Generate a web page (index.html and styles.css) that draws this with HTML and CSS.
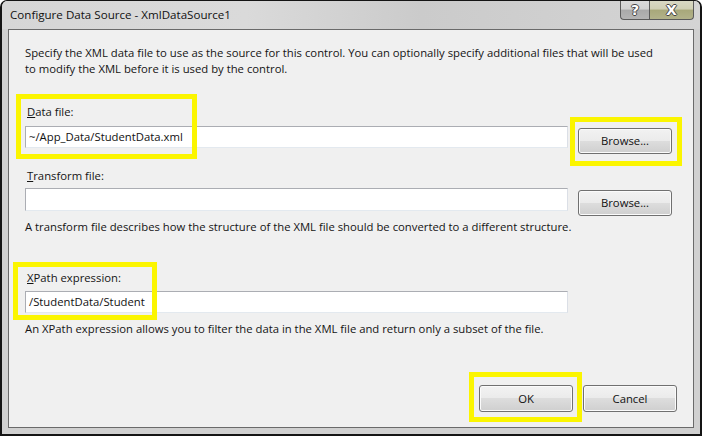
FILE: index.html
```html
<!DOCTYPE html>
<html>
<head>
<meta charset="utf-8">
<link rel="stylesheet" href="styles.css">
</head>
<body>
<div class="window">
  <div class="titlebar">
    <div class="title">Configure Data Source - XmlDataSource1</div>
    <div class="caption-buttons">
      <div class="cap-btn help"><span>?</span></div>
      <div class="cap-btn close"><span>X</span></div>
    </div>
  </div>
  <div class="panel">
    <p class="intro">Specify the XML data file to use as the source for this control. You can optionally specify additional files that will be used<br>to modify the XML before it is used by the control.</p>

    <div class="label label-data"><u>D</u>ata file:</div>
    <div class="row row-data">
      <div class="textbox">~/App_Data/StudentData.xml</div>
      <div class="btn browse">Browse...</div>
    </div>

    <div class="label label-transform"><u>T</u>ransform file:</div>
    <div class="row row-transform">
      <div class="textbox"></div>
      <div class="btn browse">Browse...</div>
    </div>
    <p class="desc desc-transform">A transform file describes how the structure of the XML file should be converted to a different structure.</p>

    <div class="label label-xpath"><u>X</u>Path expression:</div>
    <div class="row row-xpath">
      <div class="textbox">/StudentData/Student</div>
    </div>
    <p class="desc desc-xpath">An XPath expression allows you to filter the data in the XML file and return only a subset of the file.</p>

    <div class="footer">
      <div class="btn">OK</div>
      <div class="btn">Cancel</div>
    </div>
  </div>

  <div class="hl hl-data"></div>
  <div class="hl hl-browse"></div>
  <div class="hl hl-xpath"></div>
  <div class="hl hl-ok"></div>
</div>
</body>
</html>
```

FILE: styles.css
```css
* { box-sizing: border-box; }
html, body {
  margin: 0;
  padding: 0;
  background: #ffffff;
}
body {
  font-family: "Open Sans", "Noto Sans", sans-serif;
  font-size: 11.3px;
  color: #141414;
}
.window {
  position: relative;
  width: 702px;
  height: 436px;
  border: 2px solid #141414;
  border-top-width: 1px;
  border-radius: 7px 7px 0 0;
  background: #d0d0d0;
  display: flex;
  flex-direction: column;
  overflow: hidden;
}
.titlebar {
  height: 28px;
  display: flex;
  justify-content: space-between;
  align-items: flex-start;
  background: linear-gradient(90deg, #d6d6d6 0%, #dadada 35%, #cbcbcb 60%, #d4d4d4 100%);
}
.title {
  padding: 6px 0 0 8px;
  font-size: 11.6px;
  line-height: 16px;
  color: #111;
}
.caption-buttons {
  display: flex;
  margin-right: 6px;
}
.cap-btn {
  height: 19px;
  border: 1px solid #5a5a5a;
  border-top: none;
  display: flex;
  align-items: center;
  justify-content: center;
  font-family: "DejaVu Sans", sans-serif;
  font-weight: bold;
  font-size: 14px;
  color: #ffffff;
  text-shadow: 1px 0 0 #444, -1px 0 0 #444, 0 1px 0 #444, 0 -1px 0 #444;
}
.cap-btn.help {
  width: 29px;
  border-right: none;
  border-radius: 0 0 0 4px;
  background: linear-gradient(#dadada 0%, #d2d2d2 45%, #a9a9a9 50%, #b4b4b4 100%);
}
.cap-btn.close {
  width: 45px;
  border-radius: 0 0 4px 0;
  background: linear-gradient(#d8d8c4 0%, #cfcfb4 45%, #a8a87a 50%, #b2b28a 100%);
}
.panel {
  flex: 1;
  margin: 0 6px 6px 6px;
  background: #f0f0f0;
  border: 1px solid #6a6a6a;
  padding: 0 16px 0 16px;
  display: flex;
  flex-direction: column;
}
p { margin: 0; }
.intro {
  margin-top: 15px;
  line-height: 16px;
}
.label {
  line-height: 16px;
  padding-left: 2px;
}
.label-data { margin-top: 27px; }
.label-transform { margin-top: 14px; }
.label-xpath { margin-top: 35px; }
.row {
  display: flex;
  align-items: flex-start;
}
.row-data { margin-top: 6px; }
.row-transform { margin-top: 4px; }
.row-xpath { margin-top: 5px; }
.textbox {
  width: 543px;
  height: 22px;
  background: #ffffff;
  border: 1px solid #abadb3;
  border-right-color: #dbdfe6;
  border-bottom-color: #e3e9ef;
  padding: 0 3px;
  line-height: 20px;
  color: #111;
}
.row-transform .textbox { height: 23px; }
.btn {
  width: 94px;
  height: 26px;
  border: 1px solid #707070;
  border-radius: 3px;
  background: linear-gradient(#f2f2f2 0%, #ebebeb 48%, #dddddd 50%, #cfcfcf 100%);
  box-shadow: inset 0 0 0 1px #fbfbfb;
  display: flex;
  align-items: center;
  justify-content: center;
  line-height: 16px;
  color: #111;
}
.browse { margin-left: 10px; margin-top: 2px; }
.desc { line-height: 16px; }
.desc-transform { margin-top: 3px; }
.desc-xpath { margin-top: 8px; }
.footer {
  display: flex;
  justify-content: flex-end;
  gap: 10px;
  margin-top: 48px;
  padding-right: 0;
}
.footer .btn { height: 27px; }

.hl {
  position: absolute;
  border: 5px solid #fbf500;
}
.hl-data { left: 14px; top: 93px; width: 181px; height: 65px; }
.hl-browse { left: 568px; top: 116px; width: 112px; height: 49px; }
.hl-xpath { left: 11px; top: 261px; width: 144px; height: 58px; }
.hl-ok { left: 467px; top: 371px; width: 113px; height: 50px; }
```
